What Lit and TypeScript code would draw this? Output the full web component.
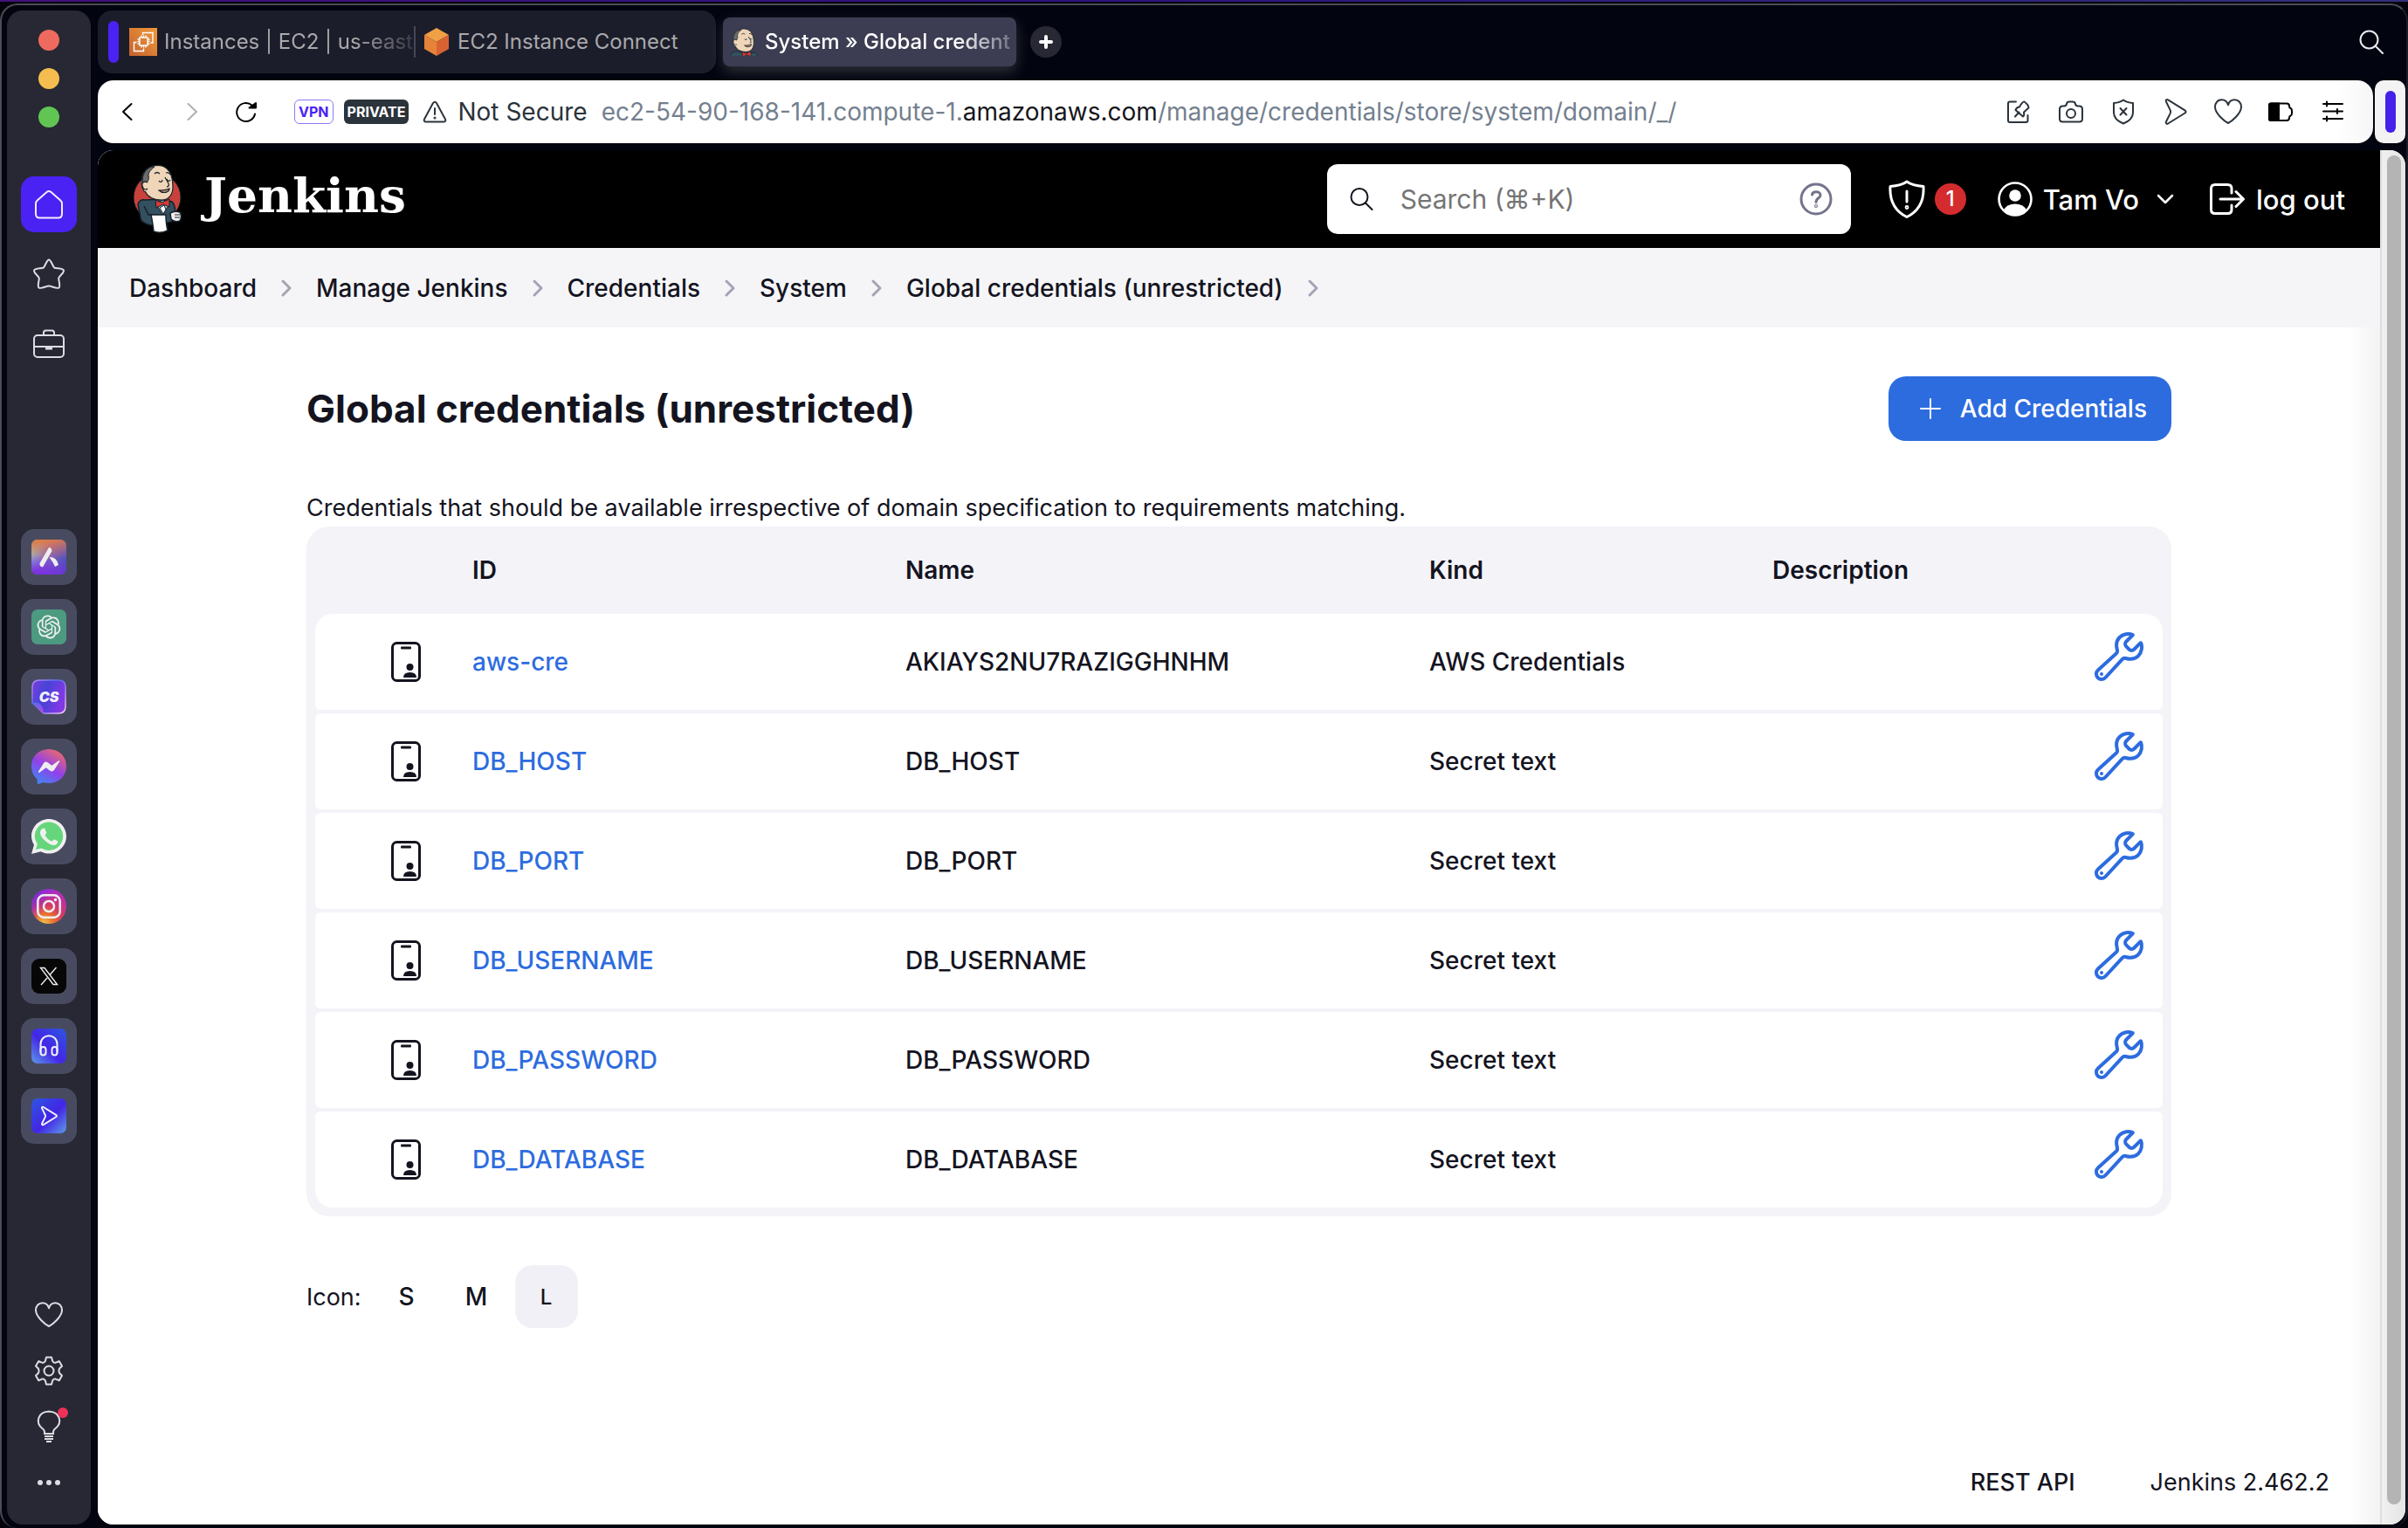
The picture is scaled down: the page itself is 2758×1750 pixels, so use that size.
import { LitElement, html, svg, css, nothing } from "lit";
import { customElement } from "lit/decorators.js";
import { classMap } from "lit/directives/class-map.js";

const base = css`
  * {
    box-sizing: border-box;
  }
  :host {
    display: block;
    font-family: Inter, "DejaVu Sans", sans-serif;
  }
  button {
    font: inherit;
    color: inherit;
    background: none;
    border: 0;
    padding: 0;
    cursor: pointer;
  }
  a {
    color: inherit;
    text-decoration: none;
  }
  svg {
    display: block;
    flex: none;
  }
`;

const line = (size: number, width: number, body: unknown) => html`
  <svg width=${size} height=${size} viewBox="0 0 ${size} ${size}" fill="none" stroke="currentColor"
    stroke-width=${width} stroke-linecap="round" stroke-linejoin="round" aria-hidden="true">${body}</svg>`;

const heart = svg`<path d="M16 29C13 27.500 1 18.500 1 10.500C1 5.500 4.500 2.200 8.500 2.200C12.500 2.200 15.200 5 16 8.200C16.800 5 19.500 2.200 23.500 2.200C27.500 2.200 31 5.500 31 10.500C31 18.500 19 27.500 16 29Z"/>`;
const plane = svg`<path d="M5 4.500C4 2.500 5.500 1.500 7.200 2.300L26.500 14.300C28 15.300 28 16.700 26.500 17.500L7.200 29.500C5.500 30.500 4 29 5 27.300L9.800 17.600Q10.400 16 9.800 14.400Z"/>`;

const butler = svg`
  <path d="M13 31C9 25 9 14 14 8C19 1 32 -1 39 5C45 10 46 19 46 26C46 34 42 41 33 41C25 41 17 38 15 32Z" fill="#efd6b9" stroke="#15202a" stroke-width="1.200"/>
  <path d="M12 21C10 15 13 8 19 4C21 3 23 3 25 3C21 6 18 9 18 13C19 16 18 18 16 22C14 20 13 20 12 21Z" fill="#6e6c6c" stroke="#15202a" stroke-width="1"/>
  <path d="M17 21C13 19 10 21 11 25C12 29 15 30 17 28" fill="#efd6b9" stroke="#15202a" stroke-width="1.200"/>
  <path d="M25 11C27 9 29 9 31 11M38 10C40 9 42 10 43 12" fill="none" stroke="#15202a" stroke-width="1.200"/>
  <path d="M30 19C31 21 34 21 34 18M39 17C40 20 42 20 43 18M37 15C40 21 44 25 39 26" fill="none" stroke="#15202a" stroke-width="1.200"/>
  <path d="M30 30C35 30 38 30 42 28C42 33 34 34 30 30Z" fill="#b98a72" stroke="#15202a" stroke-width="1.200"/>`;

@customElement("browser-sidebar")
export class BrowserSidebar extends LitElement {
  static styles = [
    base,
    css`
      :host {
        display: flex;
      }
      .rail {
        flex: 1;
        display: flex;
        flex-direction: column;
        align-items: center;
        padding: 22px 0 16px;
        border-radius: 18px;
        background: #272833;
        color: #dcdde4;
      }
      .lights {
        display: flex;
        flex-direction: column;
        gap: 20px;
        margin-bottom: 56px;
      }
      .light {
        width: 24px;
        height: 24px;
        border-radius: 50%;
      }
      .red { background: #ee6a5f; }
      .yellow { background: #f5bd4f; }
      .green { background: #61c554; }
      .group {
        display: flex;
        flex-direction: column;
        gap: 16px;
      }
      .apps {
        margin: 180px 0 auto;
      }
      .tile {
        width: 64px;
        height: 64px;
        display: grid;
        place-items: center;
        border-radius: 15px;
      }
      .home {
        background: #4a22f4;
        color: #f1edff;
      }
      .app {
        background: #484b60;
      }
      .tools {
        gap: 0;
      }
    `,
  ];

  apps = [
    ["Aria", svg`
      <defs>
        <linearGradient id="a1" x1="0" y1="0.300" x2="1" y2="0.700"><stop offset="0" stop-color="#8ad8e6"/><stop offset="0.400" stop-color="#8a62c9"/><stop offset="1" stop-color="#4c50b8"/></linearGradient>
        <linearGradient id="a2" x1="0.400" y1="0" x2="0.500" y2="0.600"><stop offset="0" stop-color="#e07a45"/><stop offset="1" stop-color="#e07a45" stop-opacity="0"/></linearGradient>
        <linearGradient id="a3" x1="0.400" y1="1" x2="0.500" y2="0.500"><stop offset="0" stop-color="#7a2fe0"/><stop offset="1" stop-color="#7a2fe0" stop-opacity="0"/></linearGradient>
      </defs>
      <rect width="40" height="40" rx="7" fill="url(#a1)"/><rect width="40" height="40" rx="7" fill="url(#a2)"/><rect width="40" height="40" rx="7" fill="url(#a3)"/>
      <path d="M20 9Q23 9 23.500 13L13 31.500Q9 31 9.500 27Z" fill="#eee"/><path d="M21 20Q29 20 31 29L27 31Q25 26 21 21Z" fill="#eee"/>`],
    ["ChatGPT", svg`
      <rect width="40" height="40" rx="7" fill="#4c9a80"/>
      <g transform="translate(6.500 6.500) scale(1.120)" fill="#eee"><path d="M22.2819 9.8211a5.9847 5.9847 0 0 0-.5157-4.9108 6.0462 6.0462 0 0 0-6.5098-2.9A6.0651 6.0651 0 0 0 4.9807 4.1818a5.9847 5.9847 0 0 0-3.9977 2.9 6.0462 6.0462 0 0 0 .7427 7.0966 5.98 5.98 0 0 0 .511 4.9107 6.051 6.051 0 0 0 6.5146 2.9001A5.9847 5.9847 0 0 0 13.2599 24a6.0557 6.0557 0 0 0 5.7718-4.2058 5.9894 5.9894 0 0 0 3.9977-2.9001 6.0557 6.0557 0 0 0-.7475-7.0729zm-9.022 12.6081a4.4755 4.4755 0 0 1-2.8764-1.0408l.1419-.0804 4.7783-2.7582a.7948.7948 0 0 0 .3927-.6813v-6.7369l2.02 1.1686a.071.071 0 0 1 .038.052v5.5826a4.504 4.504 0 0 1-4.4945 4.4944zm-9.6607-4.1254a4.4708 4.4708 0 0 1-.5346-3.0137l.142.0852 4.783 2.7582a.7712.7712 0 0 0 .7806 0l5.8428-3.3685v2.3324a.0804.0804 0 0 1-.0332.0615L9.74 19.9502a4.4992 4.4992 0 0 1-6.1408-1.6464zM2.3408 7.8956a4.485 4.485 0 0 1 2.3655-1.9728V11.6a.7664.7664 0 0 0 .3879.6765l5.8144 3.3543-2.0201 1.1685a.0757.0757 0 0 1-.071 0l-4.8303-2.7865A4.504 4.504 0 0 1 2.3408 7.872zm16.5963 3.8558L13.1038 8.364 15.1192 7.2a.0757.0757 0 0 1 .071 0l4.8303 2.7913a4.4944 4.4944 0 0 1-.6765 8.1042v-5.6772a.79.79 0 0 0-.407-.667zm2.0107-3.0231l-.142-.0852-4.7735-2.7818a.7759.7759 0 0 0-.7854 0L9.409 9.2297V6.8974a.0662.0662 0 0 1 .0284-.0615l4.8303-2.7866a4.4992 4.4992 0 0 1 6.6802 4.66zM8.3065 12.863l-2.02-1.1638a.0804.0804 0 0 1-.038-.0567V6.0742a4.4992 4.4992 0 0 1 7.3757-3.4537l-.142.0805L8.704 5.459a.7948.7948 0 0 0-.3927.6813zm1.0976-2.3654l2.602-1.4998 2.6069 1.4998v2.9994l-2.5974 1.4997-2.6067-1.4997Z"/></g>`],
    ["ChatSonic", svg`
      <defs>
        <linearGradient id="c1" x1="0" y1="0" x2="1" y2="0.300"><stop offset="0" stop-color="#7a3fe0"/><stop offset="0.450" stop-color="#4743d6"/><stop offset="1" stop-color="#8139e6"/></linearGradient>
        <linearGradient id="c2" x1="0" y1="0" x2="1" y2="1"><stop offset="0" stop-color="#b98df0"/><stop offset="0.400" stop-color="#5b6cf0"/><stop offset="0.700" stop-color="#b48af0"/><stop offset="1" stop-color="#f3d6f3"/></linearGradient>
        <linearGradient id="c3" x1="0" y1="0" x2="1" y2="1"><stop offset="0" stop-color="#4672ee"/><stop offset="1" stop-color="#c040e8"/></linearGradient>
      </defs>
      <path d="M9 1H31Q39 1 39 9V31Q39 39 31 39H14L1 27V9Q1 1 9 1Z" fill="url(#c1)" stroke="url(#c2)" stroke-width="1.500"/>
      <path d="M1 27Q13 24 14 39Z" fill="url(#c3)"/>
      <text x="20" y="26" text-anchor="middle" font-family="Inter, sans-serif" font-size="16" font-weight="900" font-style="italic" fill="#f2effc">CS</text>`],
    ["Messenger", svg`
      <defs><linearGradient id="m1" x1="0.150" y1="1" x2="0.750" y2="0"><stop offset="0" stop-color="#3b8cf2"/><stop offset="0.500" stop-color="#9140ea"/><stop offset="1" stop-color="#ec6a6c"/></linearGradient></defs>
      <path d="M20 0C31.500 0 40 8.300 40 19.500S31.500 39 20 39Q16.500 39 13.400 38L8 40Q6.700 40 6.800 38.500L6.600 34.500C2.500 31 0 25.700 0 19.500C0 8.300 8.500 0 20 0Z" fill="url(#m1)"/>
      <path d="M8 25.500L14 16Q16 13.500 18.700 15.200L23.300 18.800L31 13.200Q32.800 12.700 32 14.600L26 24Q24 26.500 21.300 24.800L16.700 21.200L9.300 26.800Q7.500 27.200 8 25.500Z" fill="#eee"/>`],
    ["WhatsApp", svg`
      <path d="M0 40L3 29.500C1 26.500 0 23.300 0 19.800C0 9 9 0 20 0S40 9 40 19.800S31 39.600 20 39.600C16.800 39.600 13.600 38.800 10.700 37.200Z" fill="#f0f0f0"/>
      <path d="M5 35L6.800 28.500C4.800 25.500 3.800 22.800 3.800 19.800C3.800 11 11.200 3.600 20 3.600S36.200 11 36.200 19.800S28.800 36 20 36C17 36 14 35.100 11.500 33.500Z" fill="#66d67c"/>
      <path d="M12.500 11Q14.500 9.800 15.500 11.500L17.200 15.500Q17.200 16.500 15.500 18.500Q18.500 24 23.500 25.500Q25.500 23.200 26.300 23.400L30.300 25.300Q30.500 29 26.700 30Q23 30.500 17.500 26.500C12 22 9.500 18 10 14.500Q10.500 12 12.500 11Z" fill="#f0f0f0"/>`],
    ["Instagram", svg`
      <defs>
        <radialGradient id="i1" cx="0.350" cy="1" r="1"><stop offset="0" stop-color="#f3c34a"/><stop offset="0.300" stop-color="#e8702f"/><stop offset="0.550" stop-color="#d83a62"/><stop offset="1" stop-color="#b42bc0"/></radialGradient>
        <linearGradient id="i2" x1="0" y1="0.100" x2="0.500" y2="0.500"><stop offset="0" stop-color="#5a2bee"/><stop offset="1" stop-color="#9a2be0" stop-opacity="0"/></linearGradient>
      </defs>
      <circle cx="20" cy="20" r="20" fill="url(#i1)"/><circle cx="20" cy="20" r="20" fill="url(#i2)"/>
      <g fill="none" stroke="#f0f0f0" stroke-width="2.500"><rect x="7.300" y="7.300" width="25.400" height="25.400" rx="7"/><circle cx="20" cy="20" r="6"/></g><circle cx="27.500" cy="12.500" r="1.700" fill="#f0f0f0"/>`],
    ["X", svg`
      <rect width="40" height="40" rx="9" fill="#070708"/>
      <path d="M10.500 10.500H15L29.500 29.500H25ZM28.500 10L21.500 18M18 22L11 30" fill="none" stroke="#eee" stroke-width="1.400"/>`],
    ["Player", svg`
      <defs><linearGradient id="p1" x1="0" y1="1" x2="1" y2="0"><stop offset="0" stop-color="#5d9ce6"/><stop offset="0.450" stop-color="#4325e6"/><stop offset="1" stop-color="#2d57e0"/></linearGradient></defs>
      <rect width="40" height="40" rx="7" fill="url(#p1)"/>
      <g fill="none" stroke="#f1effc" stroke-width="2" stroke-linecap="round"><path d="M10.500 27V18C10.500 5 29.500 5 29.500 18V27"/><rect x="10.500" y="21" width="6" height="9.500" rx="3"/><rect x="23.500" y="21" width="6" height="9.500" rx="3"/></g>`],
    ["Flow", svg`
      <defs><linearGradient id="f1" x1="0" y1="0" x2="1" y2="1"><stop offset="0" stop-color="#2d57e0"/><stop offset="0.550" stop-color="#4325e6"/><stop offset="1" stop-color="#5d9ce6"/></linearGradient></defs>
      <rect width="40" height="40" rx="7" fill="url(#f1)"/>
      <g transform="translate(8.500 8.300) scale(0.740)" fill="none" stroke="#f1effc" stroke-width="2.600" stroke-linejoin="round">${plane}</g>`],
  ] as [string, unknown][];

  render() {
    return html`
      <nav class="rail" aria-label="Browser sidebar">
        <div class="lights">
          <span class="light red"></span><span class="light yellow"></span><span class="light green"></span>
        </div>
        <div class="group">
          <button class="tile home" aria-label="Home">${line(34, 2, svg`<path d="M17 2Q18.300 2 19.500 3L30 12.300Q32 14 32 16.200V28Q32 32.500 27.500 32.500H6.500Q2 32.500 2 28V16.200Q2 14 4 12.300L14.500 3Q15.700 2 17 2Z"/>`)}</button>
          <button class="tile" aria-label="Favourites">${line(36, 2, svg`<path d="M18 1.500C20.500 1.500 22.500 9.500 24.300 10.700C26 11.800 34.800 10.800 35 14C35.200 17 29.500 20 29.200 22.800C29 25 31.500 31.500 29.500 33.500C27 35.200 20.500 31.500 18 31.500C15.500 31.500 9 35.200 6.500 33.500C4.500 31.500 7 25 6.800 22.800C6.500 20 .8 17 1 14C1.200 10.800 10 11.800 11.700 10.700C13.500 9.500 15.500 1.500 18 1.500Z"/>`)}</button>
          <button class="tile" aria-label="Workspace">${line(36, 2, svg`<rect x="1" y="8" width="34" height="25" rx="4"/><path d="M12 8V5Q12 2.500 14.500 2.500H21.500Q24 2.500 24 5V8M1 21H35"/><path d="M14 23H22" stroke-width="3" stroke-linecap="butt"/>`)}</button>
        </div>
        <div class="group apps">
          ${this.apps.map(([name, art]) => html`
            <button class="tile app" aria-label=${name}>
              <svg width="40" height="40" viewBox="0 0 40 40" aria-hidden="true">${art}</svg>
            </button>`)}
        </div>
        <div class="group tools">
          <button class="tile" aria-label="Likes">${line(32, 2, heart)}</button>
          <button class="tile" aria-label="Settings">${line(34, 2, svg`<path d="M14 1.500H20L21.200 6Q22.500 8 24.700 7.700L28.800 6L32 11.500L29 14.500Q27.800 17 29 19.500L32 22.500L28.800 28L24.700 26.300Q22.500 26 21.200 28L20 32.500H14L12.800 28Q11.500 26 9.300 26.300L5.200 28L2 22.500L5 19.500Q6.200 17 5 14.500L2 11.500L5.200 6L9.300 7.700Q11.500 8 12.800 6Z"/><circle cx="17" cy="17" r="5.500"/>`)}</button>
          <button class="tile" aria-label="Tips">
            <svg width="44" height="44" viewBox="0 2 44 44" fill="none" stroke="currentColor" stroke-width="2" aria-hidden="true">
              <path d="M17 32Q17.500 28 14.500 26C6 19 9.500 7 22 6.500C34.500 7 38 19 29.500 26Q26.500 28 27 32Z"/><path d="M17 35H27M17 38H27M19 41H25"/><circle cx="38" cy="8" r="6" fill="#ee3158" stroke="none"/>
            </svg>
          </button>
          <button class="tile" aria-label="More">
            <svg width="28" height="8" viewBox="0 0 28 8" fill="currentColor" aria-hidden="true"><circle cx="4" cy="4" r="3"/><circle cx="14" cy="4" r="3"/><circle cx="24" cy="4" r="3"/></svg>
          </button>
        </div>
      </nav>`;
  }
}

@customElement("browser-chrome")
export class BrowserChrome extends LitElement {
  static styles = [
    base,
    css`
      .tabs {
        display: flex;
        align-items: center;
        height: 72px;
        margin-bottom: 8px;
        padding-right: 25px;
        font-size: 24px;
      }
      .island {
        display: flex;
        align-items: center;
        gap: 8px;
        height: 72px;
        padding: 0 18px 0 12px;
        border-radius: 16px;
        background: #1c1d2a;
        color: #a9a9ac;
      }
      .marker {
        width: 12px;
        height: 48px;
        margin-right: 4px;
        border-radius: 6px;
        background: #4a22f4;
      }
      .rule {
        width: 2px;
        height: 36px;
        background: #45475c;
      }
      .tab {
        display: flex;
        align-items: center;
        gap: 8px;
        width: 318px;
      }
      .label {
        flex: 1;
        white-space: nowrap;
        text-align: left;
        line-height: 32px;
      }
      .fade {
        margin-right: -8px;
        mask-image: linear-gradient(90deg, #000 76%, #0003);
      }
      .active {
        width: 336px;
        height: 56px;
        margin-left: 8px;
        padding: 0 8px;
        border-radius: 8px;
        background: #3c3d52;
        color: #fff;
        font-weight: 500;
        box-shadow: 0 6px 16px #ffffff2e;
      }
      .plus {
        width: 36px;
        height: 36px;
        margin-left: 16px;
        display: grid;
        place-items: center;
        border-radius: 50%;
        background: #272833;
        color: #fff;
      }
      .find {
        margin-left: auto;
        color: #e8e8ec;
      }
      .bar {
        display: flex;
        gap: 2px;
      }
      .address {
        flex: 1;
        display: flex;
        align-items: center;
        height: 72px;
        padding: 0 30px 0 18px;
        border-radius: 18px;
        background: linear-gradient(270deg, #f6f6f6, #fff 40px);
        color: #2b333b;
      }
      .nav {
        display: flex;
        align-items: center;
        color: #000;
      }
      .forward {
        margin: 0 30px 0 42px;
        color: #b0b0b4;
      }
      .badge {
        height: 28px;
        line-height: 28px;
        padding: 0 4px;
        border-radius: 6px;
        font-size: 16px;
        font-weight: 700;
      }
      .vpn {
        margin: 0 12px 0 39px;
        line-height: 26px;
        border: 1px solid #8d78f7;
        color: #4a22f4;
      }
      .private {
        margin-right: 16px;
        background: #2b333b;
        color: #fff;
      }
      .address-text {
        margin-left: 12px;
        font-size: 28px;
        line-height: 36px;
        white-space: nowrap;
      }
      .url {
        margin-left: 16px;
        color: #74808f;
      }
      .host {
        color: #16171c;
      }
      .actions {
        display: flex;
        gap: 28px;
        margin-left: auto;
      }
      .solid {
        color: #000;
      }
      .panel {
        width: 35px;
        display: grid;
        place-items: center;
        border-radius: 10px;
        background: #f3f3f4;
      }
      .pill {
        width: 12px;
        height: 48px;
        border-radius: 6px;
        background: #4520ea;
      }
    `,
  ];

  render() {
    return html`
      <div class="tabs">
        <div class="island">
          <span class="marker"></span>
          <button class="tab">
            <svg width="32" height="32" viewBox="0 0 32 32" fill="none" stroke="#fff" stroke-width="1.400" aria-hidden="true">
              <defs><linearGradient id="g" x1="0" y1="1" x2="1" y2="0"><stop stop-color="#c4622e"/><stop offset="1" stop-color="#f0993a"/></linearGradient></defs>
              <rect width="32" height="32" fill="url(#g)" stroke="none"/>
              <rect x="12" y="11" width="9" height="9"/>
              <path d="M14 8.500V11M16.500 8.500V11M19 8.500V11M14 20V22.500M16.500 20V22.500M19 20V22.500M9.500 13H12M9.500 15.500H12M9.500 18H12M21 13H23.500M21 15.500H23.500M21 18H23.500M15.500 8V5.500H27V17H24.500M8.500 16.500H5.500V26.500H16.500V23.500"/>
            </svg>
            <span class="label fade">Instances | EC2 | us-east</span>
          </button>
          <span class="rule"></span>
          <button class="tab">
            <svg width="32" height="32" viewBox="0 0 32 32" aria-hidden="true">
              <path d="M16 0L30 8L16 16L2 8Z" fill="#f0a045"/><path d="M2 8L16 16V32L2 24Z" fill="#e58439"/><path d="M30 8L16 16V32L30 24Z" fill="#d96232"/>
            </svg>
            <span class="label">EC2 Instance Connect</span>
          </button>
        </div>
        <button class="tab active">
          <svg width="32" height="32" viewBox="5 0 48 48" aria-hidden="true">
            <path d="M4 51Q6 42 16 40L34 44L48 42Q53 44 54 51Z" fill="#33505f" stroke="#15202a"/>
            ${butler}
            <path d="M26 41L33 44L41 40V49L34 46L27 50Z" fill="#d93a36" stroke="#15202a"/>
          </svg>
          <span class="label fade">System » Global credent</span>
        </button>
        <button class="plus" aria-label="New tab">${line(16, 4, svg`<path d="M8 2V14M2 8H14"/>`)}</button>
        <button class="find" aria-label="Search tabs">${line(28, 2, svg`<circle cx="11.500" cy="11.500" r="10"/><path d="M18.500 18.500L27 27"/>`)}</button>
      </div>
      <div class="bar">
        <div class="address">
          <div class="nav">
            <button aria-label="Back">${line(32, 2, svg`<path d="M20.500 7L11 16L20.500 25"/>`)}</button>
            <button class="forward" aria-label="Forward">${line(32, 2, svg`<path d="M11.500 7L21 16L11.500 25"/>`)}</button>
            <button aria-label="Reload">${line(32, 2, svg`<path d="M26 18.500A10.500 10.500 0 1 1 22.500 8.500"/><path d="M19.500 11.500L27 6V11.500Z" fill="currentColor"/>`)}</button>
          </div>
          <span class="badge vpn">VPN</span>
          <span class="badge private">PRIVATE</span>
          ${line(28, 2, svg`<path d="M12 4Q14 1.500 16 4L26 22.500Q27 25.500 24 25.500H4Q1 25.500 2 22.500ZM14 10V17"/><circle cx="14" cy="21" r=".6"/>`)}
          <span class="address-text">Not Secure</span>
          <span class="address-text url">ec2-54-90-168-141.compute-1.<span class="host">amazonaws.com</span>/manage/credentials/store/system/domain/_/</span>
          <div class="actions">
            <button aria-label="Pin">${line(32, 2, svg`<path d="M13 4.500H6Q4 4.500 4 6.500V26Q4 28 6 28H24.500Q26.500 28 26.500 26V20M12 21.500L16.500 16.500M12.500 14L21 21.500Q23 20 22 16.500L27.500 11.500Q27.500 8 22.500 4.500Q20.500 4 17 10.500Q14 10.500 12.500 14Z"/>`)}</button>
            <button aria-label="Snapshot">${line(32, 2, svg`<path d="M3 13Q3 9.500 6.500 9.500H8Q10.500 9.500 11 7Q11.500 4.500 14 4.500H18Q20.500 4.500 21 7Q21.500 9.500 24 9.500H25.500Q29 9.500 29 13V24Q29 27.500 25.500 27.500H6.500Q3 27.500 3 24Z"/><circle cx="16" cy="18" r="5"/>`)}</button>
            <button aria-label="Blocker">${line(32, 2, svg`<path d="M16 2.500Q20 5.500 27 6V17Q27 25 16 29.500Q5 25 5 17V6Q12 5.500 16 2.500ZM12.500 12L19.500 19.500M19.500 12L12.500 19.500"/>`)}</button>
            <button aria-label="Send">${line(32, 2, plane)}</button>
            <button aria-label="Like">${line(32, 2, heart)}</button>
            <button class="solid" aria-label="Battery">${line(32, 2, svg`<path d="M5 6.500H23Q26 6.500 26 9.500Q26 11.500 27.500 12Q29 12.500 29 15V17.500Q29 20 27.500 20.500Q26 21 26 23Q26 26 23 26H5Q3 26 3 24V8.500Q3 6.500 5 6.500Z"/><path d="M5 6.500H14V26H5Q3 26 3 24V8.500Q3 6.500 5 6.500Z" fill="currentColor"/>`)}</button>
            <button class="solid" aria-label="Easy setup">${line(32, 2, svg`<path d="M5 7H27M5 15.500H27M5 24H27M9 4.500V9.500M21 13V18M9 21.500V26.500"/>`)}</button>
          </div>
        </div>
        <div class="panel"><span class="pill"></span></div>
      </div>`;
  }
}

@customElement("jenkins-header")
export class JenkinsHeader extends LitElement {
  static styles = [
    base,
    css`
      .header {
        display: flex;
        align-items: center;
        height: 112px;
        padding: 0 40px;
        background: #000;
        color: #fff;
        font-size: 31px;
        font-weight: 500;
      }
      .brand {
        display: flex;
        gap: 24px;
        margin-right: auto;
        font-family: "DejaVu Serif", serif;
        font-size: 55px;
        line-height: 72px;
        font-weight: 700;
      }
      .search {
        display: flex;
        align-items: center;
        width: 600px;
        height: 80px;
        margin-right: 42px;
        padding: 0 20px 0 26px;
        border-radius: 12px;
        background: #fff;
        color: #14141f;
      }
      .search-input {
        flex: 1;
        min-width: 0;
        height: 64px;
        margin: 0 0 0 30px;
        padding: 0;
        border: 0;
        outline: 0;
        background: none;
        font: 400 30px Inter, "DejaVu Sans", sans-serif;
        color: inherit;
      }
      .search-input::placeholder {
        color: #757575;
        opacity: 1;
      }
      .help {
        color: #73738c;
      }
      .item {
        display: flex;
        align-items: center;
        gap: 12px;
        margin-right: 40px;
      }
      .alerts {
        gap: 10px;
        margin-right: 36px;
      }
      .logout {
        margin-right: 0;
      }
      .chevron {
        margin-left: 8px;
      }
      .count {
        width: 36px;
        height: 36px;
        border-radius: 50%;
        background: #d42c2e;
        font-size: 24px;
        line-height: 36px;
        text-align: center;
      }
      .crumbs {
        display: flex;
        align-items: center;
        height: 91px;
        margin: 0;
        padding: 0 36px;
        list-style: none;
        background: #f5f5f7;
        color: #14141f;
        font-size: 28px;
        font-weight: 500;
      }
      .crumb {
        display: flex;
        align-items: center;
      }
      .arrow {
        margin: 0 26px;
        color: #a3a3b5;
      }
    `,
  ];

  crumbs = ["Dashboard", "Manage Jenkins", "Credentials", "System", "Global credentials (unrestricted)"];

  render() {
    return html`
      <header class="header">
        <a class="brand" href="#">
          <svg width="58" height="80" viewBox="0 0 58 80" aria-hidden="true">
            <circle cx="28" cy="38" r="27" fill="#c8423b" stroke="#15202a" stroke-width="1"/>
            <path d="M14 41Q8 40 6 46L9 62Q10 68 22 70L44 66L48 60Q50 48 45 43L34 40Z" fill="#33505f" stroke="#15202a" stroke-width="1.500"/>
            <path d="M26 44L34 58L42 46L36 41Z" fill="#a9c6da" stroke="#15202a"/>
            <path d="M31 50L36 47L38 52L35 57Z" fill="#fff" stroke="#15202a"/>
            ${butler}
            <path d="M26 41L33 44L42 40V49L35 46L27 50Z" fill="#d93a36" stroke="#15202a"/>
            <path d="M13 48L18 58L30 58" fill="none" stroke="#15202a" stroke-width="1.500"/>
            <path d="M21 58H38Q38 68 40 76Q32 80 24 77Q23 68 21 58Z" fill="#fff" stroke="#15202a" stroke-width="1.500"/>
            <path d="M43 56Q48 53 54 55Q57 60 54 65Q48 67 44 63Z" fill="#f4f0ee" stroke="#15202a" stroke-width="1.500"/>
            <path d="M48 58H54M48 61H54M40 67V75" fill="none" stroke="#15202a"/>
          </svg>
          Jenkins
        </a>
        <div class="search">
          ${line(28, 2, svg`<circle cx="11" cy="11.500" r="9.500"/><path d="M18 18.500L25.500 26"/>`)}
          <input class="search-input" type="search" aria-label="Search" placeholder="Search (⌘+K)" />
          <button class="help" aria-label="Help">${line(40, 3, svg`<circle cx="20" cy="20" r="17"/><path d="M15.500 15C16 10.500 25 10.500 25 15.500C25 19 20 18.500 20 23.500"/><circle cx="20" cy="28" r=".6"/>`)}</button>
        </div>
        <button class="item alerts" aria-label="Security warnings">
          ${line(44, 3, svg`<path d="M22 2Q28 6.500 41 7.500C42 25 35 36 22 42.500C9 36 2 25 3 7.500Q16 6.500 22 2ZM22 13V25"/><circle cx="22" cy="31.500" r=".9"/>`)}
          <span class="count">1</span>
        </button>
        <button class="item">
          <svg width="40" height="40" viewBox="0 0 40 40" aria-hidden="true"><circle cx="20" cy="20" r="18.500" fill="none" stroke="#fff" stroke-width="2.600"/><circle cx="20" cy="16" r="6.800" fill="#fff"/><path d="M7 32Q11 25.500 20 25.500T33 32Q28 38 20 38T7 32Z" fill="#fff"/></svg>
          Tam Vo
          <svg class="chevron" width="20" height="20" viewBox="0 0 20 20" fill="none" stroke="#fff" stroke-width="2.500" stroke-linecap="round" stroke-linejoin="round" aria-hidden="true"><path d="M2 6L10 14L18 6"/></svg>
        </button>
        <a class="item logout" href="#">
          ${line(42, 3, svg`<path d="M26 14V9Q26 4.500 21.500 4.500H7Q2.500 4.500 2.500 9V33Q2.500 37.500 7 37.500H21.500Q26 37.500 26 33V28M13 21H39M31 12.500L39.500 21L31 29.500"/>`)}
          log out
        </a>
      </header>
      <ol class="crumbs">
        ${this.crumbs.map((name) => html`
          <li class="crumb">
            <a href="#">${name}</a>
            <svg class="arrow" width="16" height="24" viewBox="0 0 16 24" fill="none" stroke="currentColor" stroke-width="3" stroke-linecap="round" stroke-linejoin="round" aria-hidden="true"><path d="M4 4L12 12L4 20"/></svg>
          </li>`)}
      </ol>`;
  }
}

@customElement("credentials-page")
export class CredentialsPage extends LitElement {
  static styles = [
    base,
    css`
      :host {
        flex: 1;
        display: flex;
        flex-direction: column;
        color: #14141f;
        font-size: 27px;
      }
      .content {
        width: 100%;
        max-width: 2216px;
        margin: 0 auto;
        padding: 56px 40px;
      }
      .top {
        display: flex;
        align-items: center;
        justify-content: space-between;
        margin-bottom: 56px;
      }
      .title {
        margin: 0;
        font-size: 44px;
        line-height: 64px;
        font-weight: 700;
      }
      .add {
        display: flex;
        align-items: center;
        gap: 22px;
        height: 74px;
        padding: 0 28px 0 36px;
        border-radius: 20px;
        background: #2d6cdf;
        color: #fff;
        font-size: 28px;
        font-weight: 500;
      }
      .intro {
        margin: 0;
        line-height: 42px;
      }
      .frame {
        padding: 0 10px 6px;
        border-radius: 26px;
        background: #f3f3f8;
      }
      .table {
        width: 100%;
        table-layout: fixed;
        border-collapse: separate;
        border-spacing: 0 4px;
        font-size: 28px;
        font-weight: 500;
      }
      .col-icon { width: 156px; }
      .col-id { width: 496px; }
      .col-name { width: 600px; }
      .col-kind { width: 393px; }
      .col-tool { width: 102px; }
      .head {
        height: 92px;
        padding: 0 24px;
        text-align: left;
        font-weight: 600;
      }
      .cell {
        height: 110px;
        padding: 0 24px;
        background: #fff;
      }
      .cell:first-child {
        padding: 0 0 0 80px;
        border-radius: 6px 0 0 6px;
      }
      .cell:last-child {
        padding: 0 18px 12px 0;
        border-radius: 0 6px 6px 0;
      }
      .row:first-child .cell:first-child { border-top-left-radius: 20px; }
      .row:first-child .cell:last-child { border-top-right-radius: 20px; }
      .row:last-child .cell:first-child { border-bottom-left-radius: 20px; }
      .row:last-child .cell:last-child { border-bottom-right-radius: 20px; }
      .link {
        color: #2d6cdf;
      }
      .tool {
        display: flex;
        justify-content: flex-end;
      }
      .sizes {
        display: flex;
        align-items: center;
        gap: 8px;
        margin-top: 56px;
      }
      .sizes-label {
        margin-right: 8px;
      }
      .size {
        width: 72px;
        height: 72px;
        border-radius: 20px;
        font-size: 28px;
        font-weight: 500;
      }
      .current {
        background: #f1f0f6;
        font-size: 24px;
      }
      .footer {
        display: flex;
        justify-content: flex-end;
        gap: 86px;
        margin-top: auto;
        padding: 28px 58px;
        line-height: 40px;
      }
      .rest {
        font-weight: 500;
      }
    `,
  ];

  rows = [
    ["aws-cre", "AKIAYS2NU7RAZIGGHNHM", "AWS Credentials"],
    ["DB_HOST", "DB_HOST", "Secret text"],
    ["DB_PORT", "DB_PORT", "Secret text"],
    ["DB_USERNAME", "DB_USERNAME", "Secret text"],
    ["DB_PASSWORD", "DB_PASSWORD", "Secret text"],
    ["DB_DATABASE", "DB_DATABASE", "Secret text"],
  ];

  render() {
    return html`
      <main class="content">
        <div class="top">
          <h1 class="title">Global credentials (unrestricted)</h1>
          <button class="add">${line(24, 2, svg`<path d="M12 1V23M1 12H23"/>`)}Add Credentials</button>
        </div>
        <p class="intro">Credentials that should be available irrespective of domain specification to requirements matching.</p>
        <div class="frame">
          <table class="table">
            <colgroup>
              <col class="col-icon" /><col class="col-id" /><col class="col-name" /><col class="col-kind" /><col /><col class="col-tool" />
            </colgroup>
            <thead>
              <tr>
                ${["", "ID", "Name", "Kind", "Description", ""].map((h) => html`<th class="head" scope="col">${h || nothing}</th>`)}
              </tr>
            </thead>
            <tbody>
              ${this.rows.map(([id, name, kind]) => html`
                <tr class="row">
                  <td class="cell">
                    <svg width="48" height="48" viewBox="0 0 48 48" aria-hidden="true">
                      <rect x="8.500" y="2.500" width="31" height="43" rx="5" fill="none" stroke="#14141f" stroke-width="3"/>
                      <rect x="18" y="6.500" width="12" height="3" rx="1" fill="#14141f"/><circle cx="28.500" cy="30" r="4" fill="#14141f"/><path d="M21 42Q21 36 28.500 36T36 42Z" fill="#14141f"/>
                    </svg>
                  </td>
                  <td class="cell"><a class="link" href="#">${id}</a></td>
                  <td class="cell">${name}</td>
                  <td class="cell">${kind}</td>
                  <td class="cell"></td>
                  <td class="cell">
                    <a class="link tool" href="#" aria-label="Update ${id}">
                      <svg width="64" height="64" viewBox="0 0 512 512" aria-hidden="true">
                        <path d="M393.870 190a32.100 32.100 0 01-45.250 0l-26.570-26.570a32.090 32.090 0 010-45.260L382.190 58a1 1 0 00-.3-1.640c-38.820-16.640-89.150-8.160-121.110 23.570-30.580 30.350-32.320 76-21.120 115.840a31.930 31.930 0 01-9.060 32.080L64 380a48.170 48.170 0 1068 68l153.860-167a31.930 31.930 0 0131.600-9.130c39.540 10.590 84.540 8.600 114.720-21.190 32.490-32 39.500-88.560 23.750-120.930a1 1 0 00-1.600-.26z" fill="none" stroke="currentColor" stroke-width="32" stroke-linecap="round" stroke-miterlimit="10"/>
                        <circle cx="96" cy="416" r="16" fill="currentColor"/>
                      </svg>
                    </a>
                  </td>
                </tr>`)}
            </tbody>
          </table>
        </div>
        <div class="sizes">
          <span class="sizes-label">Icon:</span>
          ${["S", "M", "L"].map((s) => html`<button class=${classMap({ size: true, current: s === "L" })}>${s}</button>`)}
        </div>
      </main>
      <footer class="footer">
        <a class="rest" href="#">REST API</a>
        <span>Jenkins 2.462.2</span>
      </footer>`;
  }
}

@customElement("app-root")
export class AppRoot extends LitElement {
  static styles = [
    base,
    css`
      .desktop {
        display: flex;
        min-height: 100vh;
        padding-top: 4px;
        background: linear-gradient(#00000000 2px, #05040c 2px), linear-gradient(90deg, #43127c, #2d1280 45%, #33307a);
      }
      .window {
        flex: 1;
        min-width: 0;
        display: flex;
        gap: 8px;
        padding: 6px 1px 4px 6px;
        border: 2px solid #4b4c54;
        border-bottom: 0;
        border-right-color: #1b1c28;
        border-radius: 20px;
        background: #02040f;
      }
      .sidebar {
        width: 96px;
        flex: none;
      }
      .main {
        flex: 1;
        min-width: 0;
        display: flex;
        flex-direction: column;
        gap: 8px;
      }
      .view {
        flex: 1;
        display: flex;
        overflow: hidden;
        border-radius: 18px;
        background: #fff;
      }
      .page {
        flex: 1;
        min-width: 0;
        display: flex;
        flex-direction: column;
        background: linear-gradient(270deg, #f3f3f3, #ffffff 36px);
      }
      .scroll {
        width: 29px;
        flex: none;
        display: flex;
        padding: 6px 5px 23px 6px;
        border-left: 2px solid #dedede;
        background: linear-gradient(90deg, #f0f0f0, #e4e4e4);
      }
      .thumb {
        flex: 1;
        border-radius: 8px;
        background: #b4b4b4;
      }
    `,
  ];

  render() {
    return html`
      <div class="desktop">
        <div class="window">
          <browser-sidebar class="sidebar"></browser-sidebar>
          <div class="main">
            <browser-chrome></browser-chrome>
            <div class="view">
              <div class="page">
                <jenkins-header></jenkins-header>
                <credentials-page></credentials-page>
              </div>
              <div class="scroll"><span class="thumb"></span></div>
            </div>
          </div>
        </div>
      </div>`;
  }
}
